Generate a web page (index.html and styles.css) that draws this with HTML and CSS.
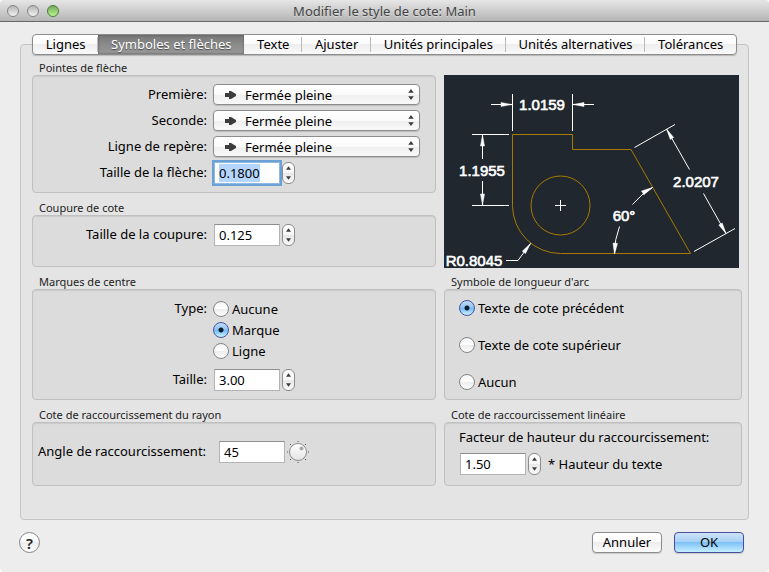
FILE: index.html
```html
<!DOCTYPE html>
<html lang="fr">
<head>
  <meta charset="UTF-8">
  <meta name="viewport" content="width=device-width, initial-scale=1.0">
  <title>Modifier le style de cote: Main</title>
  <link rel="stylesheet" href="styles.css">
</head>
<body>
  <div class="window">
    <header class="titlebar">
      <div class="lights">
        <button class="light" aria-label="Fermer"></button>
        <button class="light" aria-label="Réduire"></button>
        <button class="light light-green" aria-label="Agrandir"></button>
      </div>
      <h1>Modifier le style de cote: Main</h1>
    </header>

    <main class="content">
      <nav class="tabs" role="tablist">
        <button class="tab" role="tab">Lignes</button>
        <button class="tab active" role="tab" aria-selected="true">Symboles et flèches</button>
        <button class="tab" role="tab">Texte</button>
        <button class="tab" role="tab">Ajuster</button>
        <button class="tab" role="tab">Unités principales</button>
        <button class="tab" role="tab">Unités alternatives</button>
        <button class="tab" role="tab">Tolérances</button>
      </nav>

      <div class="panel">
        <fieldset class="group">
          <legend>Pointes de flèche</legend>
          <div class="box form">
            <label for="first">Première:</label>
            <div class="popup">
              <select id="first"><option>Fermée pleine</option></select>
              <svg class="arrowhead" viewBox="0 0 12 10"><path d="M0 3h4V1h2l5 3v2L6 9H4V7H0z"/></svg>
              <svg class="updown" viewBox="0 0 6 12"><path d="M3 0l3 4H0zM3 12l3-4H0z"/></svg>
            </div>
            <label for="second">Seconde:</label>
            <div class="popup">
              <select id="second"><option>Fermée pleine</option></select>
              <svg class="arrowhead" viewBox="0 0 12 10"><path d="M0 3h4V1h2l5 3v2L6 9H4V7H0z"/></svg>
              <svg class="updown" viewBox="0 0 6 12"><path d="M3 0l3 4H0zM3 12l3-4H0z"/></svg>
            </div>
            <label for="leader">Ligne de repère:</label>
            <div class="popup">
              <select id="leader"><option>Fermée pleine</option></select>
              <svg class="arrowhead" viewBox="0 0 12 10"><path d="M0 3h4V1h2l5 3v2L6 9H4V7H0z"/></svg>
              <svg class="updown" viewBox="0 0 6 12"><path d="M3 0l3 4H0zM3 12l3-4H0z"/></svg>
            </div>
            <label for="arrow-size">Taille de la flèche:</label>
            <div class="field">
              <input type="text" class="number" id="arrow-size" value="0.1800">
              <span class="stepper">
                <button aria-label="Augmenter"><svg viewBox="0 0 6 4"><path d="M3 0l3 4H0z"/></svg></button>
                <button aria-label="Diminuer"><svg viewBox="0 0 6 4"><path d="M0 0h6L3 4z"/></svg></button>
              </span>
            </div>
          </div>
        </fieldset>

        <!-- Dimension preview -->
        <svg class="preview" viewBox="0 0 295 193" role="img" aria-label="Aperçu">
          <rect class="screen" width="295" height="193"/>
          <g class="part">
            <path d="M68.5 130.5V59.5H128.5V74.5H187L246.5 178.5H116.5A48 48 0 0 1 68.5 130.5z"/>
            <circle cx="116.5" cy="130.5" r="29.5"/>
          </g>
          <g class="dims">
            <path d="M111 130.5h11M116.5 125v11"/>
            <path d="M68.5 19v37M128.5 19v37M47 29.5h21M129 29.5h21"/>
            <path d="M28 59.5h37M28 130.5h37M38.5 60v24M38.5 106v24"/>
            <path d="M190.5 72.5L231 49.5M250 176.5L291 153.5M222.5 54L245.5 94.5M259.5 118.5L282 158.5"/>
            <path d="M170.5 178.5A76 76 0 0 1 175.5 151.5M188.5 129.5A76 76 0 0 1 208.5 112.5"/>
            <path d="M62 185.5H74L86.5 168.5"/>
          </g>
          <g class="heads">
            <path d="M68 29.5L57 27.5v4zM129 29.5l11-2v4z"/>
            <path d="M38.5 60l-2 11h4zM38.5 130l-2-11h4z"/>
            <path d="M222.5 54L229.7 62.5 226.3 64.5zM282 158.5L278.2 148 274.8 150z"/>
            <path d="M170.5 179L169 168 173.5 168.4zM208.5 112.5L199.9 119.7 197.5 116z"/>
            <path d="M86.5 168.5L78.3 176.2 81.5 178.6z"/>
          </g>
          <g class="values">
            <text x="98" y="35">1.0159</text>
            <text x="38" y="101">1.1955</text>
            <text x="252" y="112">2.0207</text>
            <text x="180" y="146">60°</text>
            <text x="30" y="191">R0.8045</text>
          </g>
        </svg>

        <fieldset class="group">
          <legend>Coupure de cote</legend>
          <div class="box form break">
            <label for="break-size">Taille de la coupure:</label>
            <div class="field">
              <input type="text" class="number" id="break-size" value="0.125">
              <span class="stepper">
                <button aria-label="Augmenter"><svg viewBox="0 0 6 4"><path d="M3 0l3 4H0z"/></svg></button>
                <button aria-label="Diminuer"><svg viewBox="0 0 6 4"><path d="M0 0h6L3 4z"/></svg></button>
              </span>
            </div>
          </div>
        </fieldset>

        <fieldset class="group">
          <legend>Marques de centre</legend>
          <div class="box form marks">
            <span class="form-label">Type:</span>
            <div class="radios">
              <label class="radio"><input type="radio" name="mark">Aucune</label>
              <label class="radio"><input type="radio" name="mark" checked>Marque</label>
              <label class="radio"><input type="radio" name="mark">Ligne</label>
            </div>
            <label for="mark-size">Taille:</label>
            <div class="field">
              <input type="text" class="number" id="mark-size" value="3.00">
              <span class="stepper">
                <button aria-label="Augmenter"><svg viewBox="0 0 6 4"><path d="M3 0l3 4H0z"/></svg></button>
                <button aria-label="Diminuer"><svg viewBox="0 0 6 4"><path d="M0 0h6L3 4z"/></svg></button>
              </span>
            </div>
          </div>
        </fieldset>

        <fieldset class="group">
          <legend>Symbole de longueur d'arc</legend>
          <div class="box radios radios-wide">
            <label class="radio"><input type="radio" name="arc" checked>Texte de cote précédent</label>
            <label class="radio"><input type="radio" name="arc">Texte de cote supérieur</label>
            <label class="radio"><input type="radio" name="arc">Aucun</label>
          </div>
        </fieldset>

        <fieldset class="group">
          <legend>Cote de raccourcissement du rayon</legend>
          <div class="box jog">
            <label for="jog-angle">Angle de raccourcissement:</label>
            <div class="field">
              <input type="text" class="number" id="jog-angle" value="45">
              <svg class="dial" viewBox="0 0 22 22">
                <defs>
                  <linearGradient id="knob" x2="0" y2="1">
                    <stop offset="0" stop-color="#fff"/>
                    <stop offset="1" stop-color="#e4e4e4"/>
                  </linearGradient>
                </defs>
                <path class="ticks" d="M10.5 0h1v1h-1zM10.5 21h1v1h-1zM0 10.5h1v1H0zM21 10.5h1v1h-1zM3 3h1v1H3zM18 3h1v1h-1zM3 18h1v1H3zM18 18h1v1h-1z"/>
                <circle class="knob" cx="11" cy="11" r="8.5"/>
                <circle class="dot" cx="14.5" cy="7.5" r="2"/>
              </svg>
            </div>
          </div>
        </fieldset>

        <fieldset class="group">
          <legend>Cote de raccourcissement linéaire</legend>
          <div class="box factor">
            <label for="jog-factor">Facteur de hauteur du raccourcissement:</label>
            <div class="field">
              <input type="text" class="number" id="jog-factor" value="1.50">
              <span class="stepper">
                <button aria-label="Augmenter"><svg viewBox="0 0 6 4"><path d="M3 0l3 4H0z"/></svg></button>
                <button aria-label="Diminuer"><svg viewBox="0 0 6 4"><path d="M0 0h6L3 4z"/></svg></button>
              </span>
              <span class="unit">* Hauteur du texte</span>
            </div>
          </div>
        </fieldset>
      </div>
    </main>

    <footer class="footer">
      <button class="help" aria-label="Aide">?</button>
      <button class="btn">Annuler</button>
      <button class="btn primary">OK</button>
    </footer>
  </div>

  <script>
    // The arrow size is ready to be typed over when the dialog opens
    const arrowSize = document.getElementById('arrow-size');
    arrowSize.focus();
    arrowSize.select();
  </script>
</body>
</html>
```

FILE: styles.css
```css
* {
  box-sizing: border-box;
}
body {
  margin: 0;
  background: white;
  font-family: "Lucida Grande", "Noto Sans", "Open Sans", sans-serif;
  font-size: 13px;
  line-height: 20px;
  color: black;
}
button, input, select {
  font: inherit;
  color: inherit;
  margin: 0;
  padding: 0;
}
.window {
  min-height: 100vh;
  display: flex;
  flex-direction: column;
  background: #ededed;
  border-radius: 4px;
  overflow: hidden;
}

.titlebar {
  display: grid;
  grid-template-columns: 1fr auto 1fr;
  align-items: center;
  height: 22px;
  padding: 0 7px;
  background: linear-gradient(#e6e6e6, #b5b5b5);
  border-bottom: 1px solid #686868;
}
.titlebar h1 {
  margin: 0;
  font-size: 13px;
  font-weight: normal;
  color: #444;
  text-shadow: 0 1px 0 rgba(255, 255, 255, 0.4);
}
.lights {
  display: flex;
  gap: 8px;
}
.light {
  width: 12px;
  height: 12px;
  border: 1px solid #858585;
  border-radius: 50%;
  background: linear-gradient(#b4b4b4, #f2f2f2);
}
.light-green {
  border-color: #4b7d3a;
  background: linear-gradient(#76a95d, #b5f58f);
}

.content {
  flex: 1;
  display: flex;
  flex-direction: column;
  padding: 12px 20px 0;
}
.tabs {
  position: relative;
  display: flex;
  height: 21px;
  margin: 0 12px;
  border: 1px solid #8c8c8c;
  border-radius: 4px;
  background: linear-gradient(#fff, #fbfbfb 50%, #eee 50%, #f9f9f9);
  box-shadow: 0 1px 1px rgba(0, 0, 0, 0.2);
  overflow: hidden;
}
.tab {
  flex: 1 1 auto;
  border: none;
  background: linear-gradient(#bbb, #bbb) right center / 1px 15px no-repeat;
  line-height: 19px;
  white-space: nowrap;
}
.tab:last-child {
  background: none;
}
.tab.active {
  background: linear-gradient(#777, #8b8b8b 50%, #989898);
  box-shadow: inset 0 0 2px #444;
  color: white;
  text-shadow: 0 1px 1px rgba(0, 0, 0, 0.5);
}

.panel {
  flex: 1;
  display: grid;
  grid-template-columns: 404fr 298fr;
  column-gap: 8px;
  align-content: start;
  margin-top: -11px;
  padding: 8px 6px 0 11px;
  border: 1px solid #c4c4c4;
  border-radius: 4px;
  background: #e4e4e4;
}
.group {
  display: flex;
  flex-direction: column;
  min-width: 0;
  margin: 0;
  padding: 0;
  border: none;
}
.group legend {
  padding: 8px 7px 0;
  font-size: 11px;
  line-height: 14px;
  color: #222;
}
.box {
  flex: 1;
  padding: 8px 0;
  border: 1px solid #c0c0c0;
  border-radius: 4px;
  background: #dcdcdc;
  box-shadow: inset 0 1px 1px rgba(0, 0, 0, 0.08);
}
.form {
  display: grid;
  grid-template-columns: 174px 1fr;
  gap: 5px 6px;
  align-content: start;
  padding-right: 15px;
}
.form > label, .form-label {
  text-align: right;
}
.break {
  padding-bottom: 20px;
}
.marks {
  row-gap: 8px;
}
.preview {
  grid-column: 2;
  grid-row: 1 / span 2;
  width: 295px;
  max-width: 100%;
  margin: 22px 0 -1px;
}

.popup {
  position: relative;
}
.popup select {
  display: block;
  width: 100%;
  height: 21px;
  padding: 0 24px 1px 31px;
  appearance: none;
  border: 1px solid #8c8c8c;
  border-radius: 4px;
  background: linear-gradient(#fff, #fafafa 50%, #eee 50%, #f9f9f9);
  box-shadow: 0 1px 1px rgba(0, 0, 0, 0.15);
}
.popup svg {
  position: absolute;
  fill: #3c3c3c;
  pointer-events: none;
}
.arrowhead {
  left: 12px;
  top: 6px;
  width: 12px;
  height: 10px;
}
.updown {
  right: 6px;
  top: 5px;
  width: 6px;
  height: 11px;
}

.field {
  display: flex;
  align-items: center;
}
.number {
  width: 66px;
  height: 22px;
  margin-left: 1px;
  padding: 0 4px;
  border: 1px solid #b4b4b4;
  border-top-color: #8e8e8e;
  background: white;
}
.number:focus {
  outline: 2px solid #6ba1d5;
  border-color: #8fb9e2;
}
.number::selection {
  background: #b4d5fe;
  color: black;
}
.stepper {
  display: flex;
  flex-direction: column;
  width: 13px;
  height: 22px;
  margin-left: 2px;
  border: 1px solid #8c8c8c;
  border-radius: 6px;
  background: linear-gradient(#fff, #f6f6f6 50%, #e8e8e8 50%, #fafafa);
}
.stepper button {
  flex: 1;
  display: flex;
  align-items: center;
  justify-content: center;
  border: none;
  background: none;
}
.stepper svg {
  width: 5px;
  height: 4px;
  fill: #3c3c3c;
}

.radios {
  display: flex;
  flex-direction: column;
}
.radio {
  display: flex;
  align-items: center;
  gap: 3px;
  height: 21px;
}
.radio input {
  appearance: none;
  width: 16px;
  height: 16px;
  border: 1px solid #858585;
  border-radius: 50%;
  background: linear-gradient(#f4f4f4, #fff 50%, #ececec 50%, #fff);
}
.radio input:checked {
  border-color: #45559c;
  background: radial-gradient(circle, #0d1d30 2px, transparent 3px), linear-gradient(#c3dcf6, #8bc2f2 50%, #70b8f4 50%, #c8f3ff);
}
.radios-wide {
  gap: 16px;
  padding: 7px 14px;
}

.jog {
  display: flex;
  align-items: flex-start;
  gap: 12px;
  padding: 18px 5px 22px;
}
.dial {
  width: 22px;
  height: 22px;
  margin-left: 2px;
}
.ticks {
  fill: #555;
}
.knob {
  fill: url(#knob);
  stroke: #8c8c8c;
}
.dot {
  fill: #aaa;
}
.factor {
  display: flex;
  flex-direction: column;
  gap: 6px;
  padding: 4px 14px 10px;
}
.unit {
  margin-left: 7px;
}

.screen {
  fill: #21272f;
}
.part {
  fill: none;
  stroke: #a87b00;
}
.dims {
  fill: none;
  stroke: white;
}
.heads {
  fill: white;
  stroke: white;
  stroke-width: 0.5px;
}
.values {
  fill: white;
  stroke: white;
  stroke-width: 0.6px;
  font-family: "Liberation Sans", Arial, sans-serif;
  font-size: 15px;
  text-anchor: middle;
}

.footer {
  display: flex;
  align-items: center;
  gap: 12px;
  padding: 12px 25px 19px 19px;
}
.help {
  width: 21px;
  height: 21px;
  margin-right: auto;
  border: 1px solid #858585;
  border-radius: 50%;
  background: linear-gradient(#fff, #f8f8f8 50%, #ececec 50%, #fff);
  font-size: 15px;
  font-weight: 600;
  line-height: 18px;
  color: #222;
}
.btn {
  min-width: 70px;
  height: 21px;
  border: 1px solid #8c8c8c;
  border-radius: 4px;
  background: linear-gradient(#fff, #fafafa 50%, #eee 50%, #fbfbfb);
  box-shadow: 0 1px 1px rgba(0, 0, 0, 0.15);
  line-height: 19px;
}
.btn.primary {
  border-color: #4a4f9c;
  background: linear-gradient(#cfe3f8, #a3cff6 50%, #7fc0f6 50%, #c4f0ff);
}
```
